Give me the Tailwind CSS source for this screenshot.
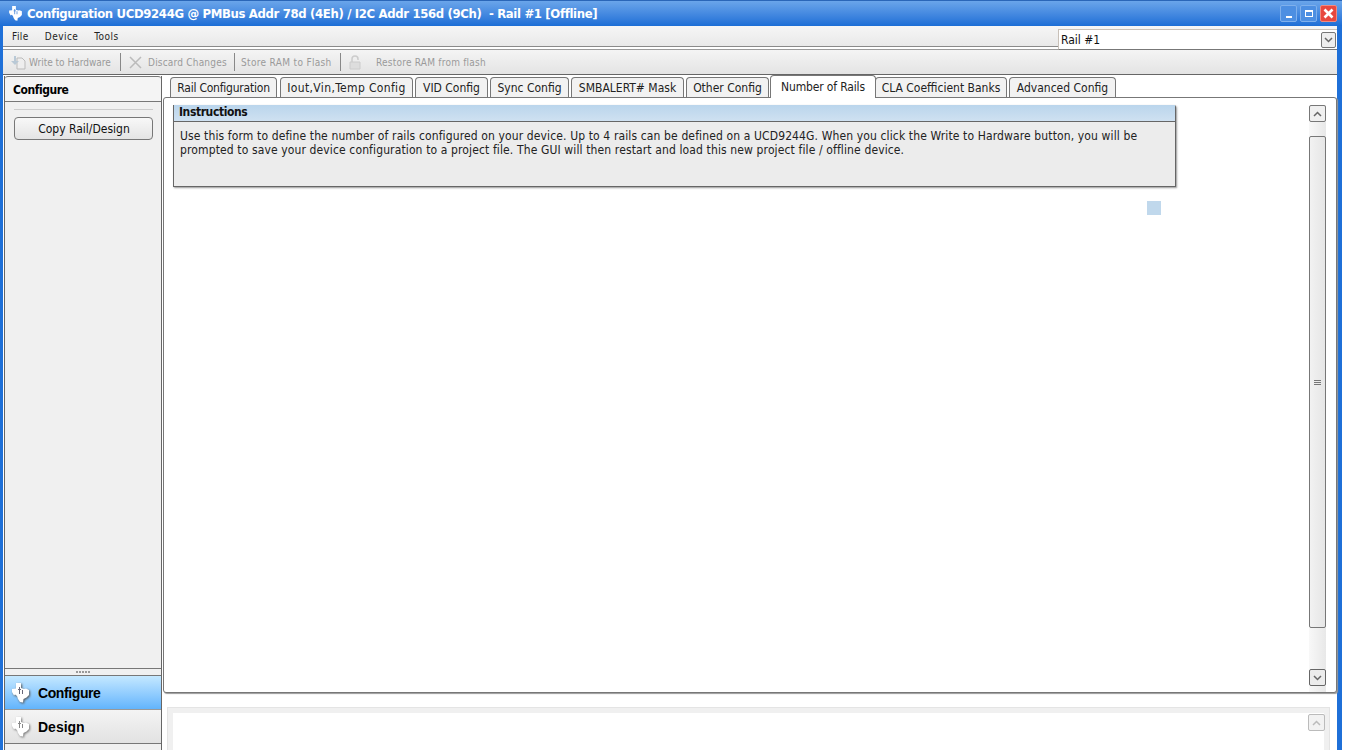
<!DOCTYPE html>
<html lang="en">
<head>
  <meta charset="UTF-8" />
  <title>Configuration UCD9244G</title>
  <script src="https://cdn.jsdelivr.net/npm/@tailwindcss/browser@4"></script>
</head>
<body class="bg-white w-[1346px] h-[750px] overflow-hidden font-['DejaVu_Sans_Condensed','DejaVu_Sans',sans-serif] text-[12px] text-[#111]">
  <div class="w-[1342px] h-[750px] bg-[#1f70d8] flex flex-col pl-[3px] pr-[5px]">

    <!-- Title bar -->
    <div class="h-[26px] -ml-[3px] -mr-[5px] pl-[8px] pr-[5px] flex items-center bg-gradient-to-b from-[#6aa5ea] to-[#1c6ed6] border-t border-[#2a66b8]">
      <svg class="w-[15px] h-[15px] mr-[4px]" viewBox="0 0 17 20"><path fill="#fff" d="M4 0h5v5l3 1 2-.5 3 1.500v5l-2.500 2.500-3 1.500-.5 3.500-3-.5-2-3-1-3-2-1.500-1 1L0 9V6l4-.5z"/><path fill="#3f80d6" d="M6 6h1V4h1v2h1v1H8v4H7V7H6zM10 7h1v4h-1z"/></svg>
      <span class="text-white font-bold text-[13px] tracking-[-0.35px] whitespace-pre">Configuration UCD9244G @ PMBus Addr 78d (4Eh) / I2C Addr 156d (9Ch)  - Rail #1 [Offline]</span>
      <div class="ml-auto flex gap-[3px] items-center">
        <div class="w-[17px] h-[17px] rounded-[2px] bg-[#4d8fe2] border border-[#7fb0ec] flex items-end justify-center pb-[3px]"><div class="w-[6px] h-[2px] bg-white"></div></div>
        <div class="w-[17px] h-[17px] rounded-[2px] bg-[#4d8fe2] border border-[#7fb0ec] flex items-center justify-center"><div class="w-[8px] h-[7px] border border-t-2 border-white"></div></div>
        <div class="w-[17px] h-[17px] rounded-[2px] bg-[#e8483f] border border-[#f08a80] flex items-center justify-center">
          <svg class="w-[11px] h-[11px]" viewBox="0 0 11 11"><path d="M1.500 1.500l8 8M9.500 1.500l-8 8" stroke="#fff" stroke-width="2.600"/></svg>
        </div>
      </div>
    </div>

    <div class="flex-1 min-h-0 bg-white flex flex-col">
      <!-- Menu bar -->
      <div class="h-[21px] shrink-0 flex bg-gradient-to-b from-[#f6f6f6] to-[#e9e9e9] border-b border-[#8a8a8a]">
        <div class="flex items-center gap-[16px] pl-[9px] text-[10px] tracking-[0.45px] text-[#222]">
          <span>File</span><span>Device</span><span>Tools</span>
        </div>
        <div class="ml-auto w-[279px] h-[21px] mt-[3px] bg-white border-t border-l border-[#c8c0b8] border-b border-b-[#777] flex items-center pl-[2px] relative z-10 text-[12px]">
          Rail #1
          <div class="ml-auto mr-[1px] w-[15px] h-[16px] rounded-[2px] border border-[#777] bg-[#eee] flex items-center justify-center">
            <svg class="w-[9px] h-[6px]" viewBox="0 0 9 6"><path d="M1 1l3.500 3.500L8 1" fill="none" stroke="#666" stroke-width="1.500"/></svg>
          </div>
        </div>
      </div>

      <!-- Toolbar -->
      <div class="h-[26px] shrink-0 mt-[2px] flex items-center bg-gradient-to-b from-[#f4f4f4] to-[#e4e4e4] border-t border-[#9a9a9a] border-b border-b-[#666] text-[10px] text-[#9a9a9a]">
        <svg class="w-[15px] h-[15px] ml-[8px] mr-[3px]" viewBox="0 0 15 15"><path d="M6 3h5l3 3v8H6z" fill="#eee" stroke="#bbb"/><path d="M3 1v5H0l4 4 4-4H5V1z" fill="#b9c9d6"/></svg>
        <span class="w-[83px] whitespace-nowrap">Write to Hardware</span>
        <div class="w-[1px] h-[18px] bg-[#888] ml-[8px] mr-[8px]"></div>
        <svg class="w-[13px] h-[13px] mr-[6px]" viewBox="0 0 13 13"><path d="M1 1l11 11M12 1L1 12" stroke="#bbb" stroke-width="1.500"/></svg>
        <span class="w-[79px] whitespace-nowrap tracking-[0.2px]">Discard Changes</span>
        <div class="w-[1px] h-[18px] bg-[#888] ml-[7px] mr-[6px]"></div>
        <span class="w-[91px] whitespace-nowrap tracking-[0.33px]">Store RAM to Flash</span>
        <div class="w-[1px] h-[18px] bg-[#888] ml-[8px] mr-[8px]"></div>
        <svg class="w-[12px] h-[15px] mr-[15px]" viewBox="0 0 12 15"><path d="M3 7V4a3 3 0 0 1 6 0v1" fill="none" stroke="#ccc" stroke-width="1.500"/><path d="M1 7h10v7H1z" fill="#ddd" stroke="#ccc"/></svg>
        <span class="whitespace-nowrap tracking-[0.23px]">Restore RAM from flash</span>
      </div>

      <!-- Body -->
      <div class="flex-1 min-h-0 flex">
        <!-- Left panel -->
        <aside class="w-[158px] shrink-0 ml-[1px] mt-[1px] flex flex-col bg-[#f0f0f0] border-x border-[#666]">
          <div class="h-[26px] shrink-0 pl-[8px] pt-[1px] flex items-center font-bold text-[12px] tracking-[-0.45px] text-black bg-[#f4f4f4] border-t border-b border-[#777] rounded-t-[3px]">Configure</div>
          <div class="flex-1 pl-[9px] pr-[8px] pt-[7px]">
            <div class="h-[1px] bg-[#ccc]"></div>
            <div class="mt-[7px] h-[23px] rounded-[4px] border border-[#777] bg-gradient-to-b from-[#f8f8f8] to-[#e4e4e4] flex items-center justify-center text-[#111] text-[12px] pl-[1px]">Copy Rail/Design</div>
          </div>
          <div class="h-[8px] shrink-0 border-t border-b border-[#777] bg-[#f0f0f0] flex items-center justify-center gap-[1px]">
            <i class="w-[2px] h-[2px] bg-[#999]"></i><i class="w-[2px] h-[2px] bg-[#999]"></i><i class="w-[2px] h-[2px] bg-[#999]"></i><i class="w-[2px] h-[2px] bg-[#999]"></i><i class="w-[2px] h-[2px] bg-[#999]"></i>
          </div>
          <div class="h-[34px] shrink-0 pl-[7px] pt-[1px] flex items-center gap-[9px] font-['Liberation_Sans',sans-serif] font-bold text-[14px] tracking-[-0.4px] text-black bg-gradient-to-b from-[#c4e8ff] to-[#62b4fc] border-b border-[#999]">
            <svg class="w-[17px] h-[20px] drop-shadow-[1px_1px_1px_#555]" viewBox="0 0 17 20"><path fill="#fff" d="M4 0h5v5l3 1 2-.5 3 1.500v5l-2.500 2.500-3 1.500-.5 3.500-3-.5-2-3-1-3-2-1.500-1 1L0 9V6l4-.5z"/><path fill="#667" d="M6 6h1V4h1v2h1v1H8v4H7V7H6zM10 7h1v4h-1z"/></svg>
            Configure
          </div>
          <div class="h-[34px] shrink-0 pl-[7px] pt-[1px] flex items-center gap-[9px] font-['Liberation_Sans',sans-serif] font-bold text-[14px] text-black bg-gradient-to-b from-[#f4f4f4] to-[#e2e2e2] border-b border-[#777]">
            <svg class="w-[17px] h-[20px] drop-shadow-[1px_1px_1px_#777]" viewBox="0 0 17 20"><path fill="#fff" d="M4 0h5v5l3 1 2-.5 3 1.500v5l-2.500 2.500-3 1.500-.5 3.500-3-.5-2-3-1-3-2-1.500-1 1L0 9V6l4-.5z"/><path fill="#888" d="M6 6h1V4h1v2h1v1H8v4H7V7H6zM10 7h1v4h-1z"/></svg>
            Design
          </div>
          <div class="h-[6px] shrink-0 bg-[#f0f0f0]"></div>
        </aside>

        <!-- Right side -->
        <div class="flex-1 min-w-0 flex flex-col pl-[1px]">
          <div class="h-[22px] shrink-0 flex items-end pl-[7px] gap-[2px] text-[12px] text-[#222] relative z-10">
            <div class="w-[107px] h-[20px] flex items-center justify-center bg-[#f2f2f2] border border-b-0 border-[#777] rounded-t-[4px] tracking-[-0.22px]">Rail Configuration</div>
            <div class="w-[133px] h-[20px] ml-[1px] flex items-center justify-center bg-[#f2f2f2] border border-b-0 border-[#777] rounded-t-[4px] tracking-[0.35px]">Iout,Vin,Temp Config</div>
            <div class="w-[73px] h-[20px] flex items-center justify-center bg-[#f2f2f2] border border-b-0 border-[#777] rounded-t-[4px]">VID Config</div>
            <div class="w-[79px] h-[20px] flex items-center justify-center bg-[#f2f2f2] border border-b-0 border-[#777] rounded-t-[4px]">Sync Config</div>
            <div class="w-[113px] h-[20px] flex items-center justify-center bg-[#f2f2f2] border border-b-0 border-[#777] rounded-t-[4px]">SMBALERT# Mask</div>
            <div class="w-[83px] h-[20px] flex items-center justify-center bg-[#f2f2f2] border border-b-0 border-[#777] rounded-t-[4px]">Other Config</div>
            <div class="w-[106px] h-[23px] -mb-[1px] -ml-[1px] -mr-[3px] flex items-center justify-center bg-white border border-b-0 border-[#777] rounded-t-[4px] tracking-[-0.15px]">Number of Rails</div>
            <div class="w-[132px] h-[20px] flex items-center justify-center bg-[#f2f2f2] border border-b-0 border-[#777] rounded-t-[4px]">CLA Coefficient Banks</div>
            <div class="w-[107px] h-[20px] flex items-center justify-center bg-[#f2f2f2] border border-b-0 border-[#777] rounded-t-[4px]">Advanced Config</div>
          </div>

          <div class="h-[596px] shrink-0 relative flex justify-between bg-white border border-[#777] rounded-[3px] shadow-[1px_1px_1px_#999] pl-[9px] pt-[7px]">
            <div class="w-[1003px] h-[82px] flex flex-col bg-[#ececec] border-l border-r border-b border-[#666] shadow-[1px_1px_2px_#999] rounded-tr-[2px]">
              <div class="h-[17px] shrink-0 pl-[5px] pb-[2px] flex items-center font-bold tracking-[-0.4px] text-[#111] bg-gradient-to-b from-[#bad5ec] to-[#cfe1f1] border-b border-[#666]">Instructions</div>
              <p class="pl-[6px] pt-[7px] leading-[14px] tracking-[0.125px] text-[#222] whitespace-nowrap">Use this form to define the number of rails configured on your device. Up to 4 rails can be defined on a UCD9244G. When you click the Write to Hardware button, you will be<br>prompted to save your device configuration to a project file. The GUI will then restart and load this new project file / offline device.</p>
            </div>
            <div class="absolute left-[983px] top-[103px] w-[14px] h-[14px] bg-[#c0d8ec]"></div>

            <!-- Scrollbar -->
            <div class="w-[17px] mr-[10px] flex flex-col bg-gradient-to-r from-[#f8f8f8] to-[#e8e8e8]">
              <div class="h-[17px] shrink-0 rounded-[2px] border border-[#777] bg-[#f0f0f0] flex items-center justify-center">
                <svg class="w-[9px] h-[6px]" viewBox="0 0 9 6"><path d="M1 5l3.500-3.500L8 5" fill="none" stroke="#666" stroke-width="1.500"/></svg>
              </div>
              <div class="h-[492px] shrink-0 mt-[14px] rounded-[2px] border border-[#777] bg-gradient-to-r from-[#f2f2f2] to-[#e6e6e6] flex flex-col items-center justify-center gap-[1px]">
                <i class="w-[7px] h-[1px] bg-[#777]"></i><i class="w-[7px] h-[1px] bg-[#777]"></i><i class="w-[7px] h-[1px] bg-[#777]"></i>
              </div>
              <div class="h-[17px] shrink-0 mt-[41px] rounded-[2px] border border-[#666] bg-[#ececec] flex items-center justify-center">
                <svg class="w-[9px] h-[6px]" viewBox="0 0 9 6"><path d="M1 1l3.500 3.500L8 1" fill="none" stroke="#666" stroke-width="1.500"/></svg>
              </div>
            </div>
          </div>

          <!-- Lower panel -->
          <div class="h-[70px] shrink-0 mt-[14px] ml-[4px] mr-[7px] flex justify-end border border-[#e4e4e4] pt-[6px] bg-white shadow-[inset_0_0_0_5px_#f0f0f0]">
            <div class="w-[17px] mr-[4px] h-[17px] rounded-[2px] border border-[#bbb] bg-[#f2f2f2] flex items-center justify-center">
              <svg class="w-[9px] h-[6px]" viewBox="0 0 9 6"><path d="M1 5l3.500-3.500L8 5" fill="none" stroke="#bbb" stroke-width="1.500"/></svg>
            </div>
          </div>
        </div>
      </div>
    </div>
  </div>
</body>
</html>
